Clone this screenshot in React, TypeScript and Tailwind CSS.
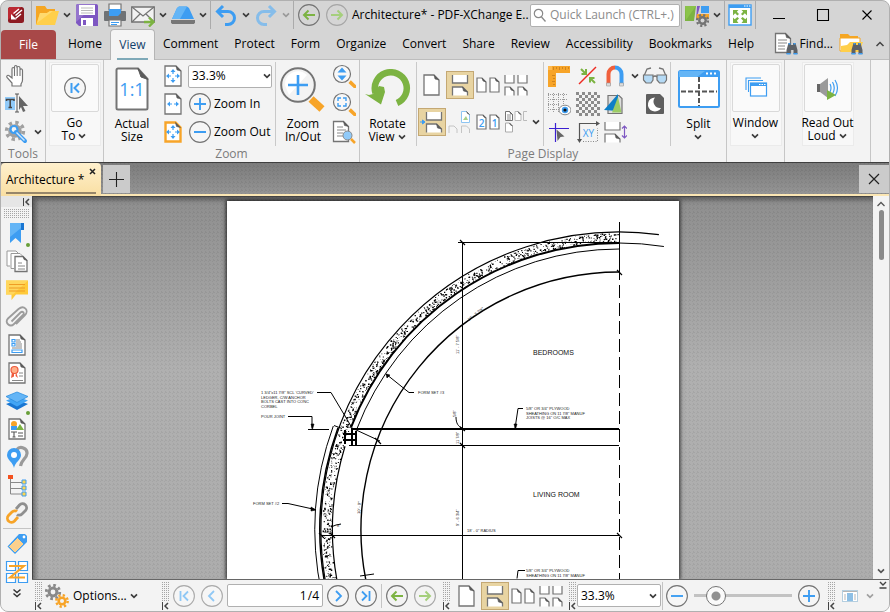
import React, { useState } from "react";

const blue = "#3d9df2";
const grey = "#747474";
const dark = "#5a5a5a";
const orange = "#f7a428";
const green = "#7cb342";

const weave =
  "bg-[linear-gradient(45deg,rgba(0,0,0,0.06)_25%,transparent_25%,transparent_75%,rgba(0,0,0,0.06)_75%),linear-gradient(#8e8e8e,#b0b0b0_45%,#adadad)] bg-[length:4px_4px,100%_100%]";
const darkWeave =
  "bg-[linear-gradient(45deg,rgba(0,0,0,0.06)_25%,transparent_25%,transparent_75%,rgba(0,0,0,0.06)_75%),linear-gradient(#7c7c7c,#969696)] bg-[length:4px_4px,100%_100%]";

type Kids = { children?: React.ReactNode };

function Svg({ w = 24, h = 24, children }: Kids & { w?: number; h?: number }) {
  return (
    <svg width={w} height={h} viewBox={`0 0 ${w} ${h}`} fill="none" className="block shrink-0" aria-hidden="true">
      {children}
    </svg>
  );
}

function Btn({ label, className = "", children }: Kids & { label: string; className?: string }) {
  return (
    <button type="button" aria-label={label} className={`flex shrink-0 items-center justify-center ${className}`}>
      {children}
    </button>
  );
}

function Chevron({ color = "#3c3c3c" }: { color?: string }) {
  return (
    <Svg w={10} h={8}>
      <path d="M2 2.300L5 5.300L8 2.300" stroke={color} strokeWidth="1.700" />
    </Svg>
  );
}

// Sheet of paper with a folded top right corner
function Sheet({ x = 0, y = 0, w, h, f = 5, stroke = grey, sw = 1.3, fill = "#fff" }: {
  x?: number; y?: number; w: number; h: number; f?: number; stroke?: string; sw?: number; fill?: string;
}) {
  return (
    <g>
      <path d={`M${x} ${y}h${w - f}l${f} ${f}v${h - f}h${-w}z`} fill={fill} stroke={stroke} strokeWidth={sw} />
      <path d={`M${x + w - f} ${y}l1 ${f - 1}l${f - 1} 1z`} fill={dark} stroke={dark} strokeWidth="0.6" />
    </g>
  );
}

function Round({ color = grey, children }: Kids & { color?: string }) {
  return (
    <Svg>
      <circle cx="12" cy="12" r="10.4" fill="#f6f6f6" stroke={color} strokeWidth="1.1" />
      {children}
    </Svg>
  );
}

function Plus() {
  return <Round><path d="M12 6v12M6 12h12" stroke={blue} strokeWidth="1.9" /></Round>;
}
function Minus() {
  return <Round><path d="M6 12h12" stroke={blue} strokeWidth="1.9" /></Round>;
}

function ArrowLeft({ faded = false, flip = false }: { faded?: boolean; flip?: boolean }) {
  return (
    <Svg>
      <circle cx="12" cy="12" r="10.4" stroke={faded ? "#a6a6a6" : grey} strokeWidth="1.1" />
      <path
        d={flip ? "M6 12h11M12.5 7.5L17 12l-4.5 4.5" : "M18 12H7M11.5 7.5L7 12l4.5 4.5"}
        stroke={faded ? "#a5cf7c" : green}
        strokeWidth="2"
      />
    </Svg>
  );
}

function Binoculars({ x, y }: { x: number; y: number }) {
  return (
    <g transform={`translate(${x} ${y})`}>
      <path d="M2.5 0h2.5v2h2V0h2.500l2 7v4H7.500V7h-3v4H.5V7z" fill="#5d6166" />
      <path d="M2.500 0h2v1.500h-2zM7.500 0h2v1.500h-2zM.5 10h4v1.500h-4zM7.500 10h4v1.500h-4z" fill={blue} />
    </g>
  );
}

function Gear({ x, y, r, color, hole }: { x: number; y: number; r: number; color: string; hole: string }) {
  return (
    <g>
      <circle cx={x} cy={y} r={r * 0.84} stroke={color} strokeWidth={r * 0.36} strokeDasharray={`${r * 0.33} ${r * 0.33}`} />
      <circle cx={x} cy={y} r={r * 0.68} fill={color} />
      <circle cx={x} cy={y} r={r * 0.3} fill={hole} />
    </g>
  );
}

// Four small arrows pointing outwards
function FourArrows({ cx, cy }: { cx: number; cy: number }) {
  return (
    <g transform={`translate(${cx} ${cy})`} fill={blue}>
      <path d="M0-7l2.500 3h-5zM0 7l2.500-3h-5zM-7 0l3-2.500v5zM7 0l-3-2.500v5z" />
      <path d="M0-4v2M0 4V2M-4 0h2M4 0H2" stroke={blue} strokeWidth="1.2" />
    </g>
  );
}

function Continuous() {
  return (
    <g>
      <path d="M6.500 4v8h15V4" fill="#fff" stroke={grey} strokeWidth="1.300" />
      <path d="M6.500 24.500v-8.500h10l5 5v3.500" fill="#fff" stroke={grey} strokeWidth="1.300" />
      <path d="M16.500 16l1 4l4 1z" fill={dark} stroke={dark} strokeWidth=".6" />
    </g>
  );
}

function PageSingle() {
  return <Svg><Sheet x={4} y={2} w={15} h={20} /></Svg>;
}
function PageContinuous() {
  return <Svg w={28} h={28}><Continuous /></Svg>;
}
function PageTwo() {
  return <Svg><Sheet x={1} y={5} w={9} h={14} f={4} sw={1.2} /><Sheet x={14} y={5} w={9} h={14} f={4} sw={1.2} /></Svg>;
}
function PageFour() {
  return (
    <Svg>
      {[1, 14].map((x) => (
        <g key={x}>
          <path d={`M${x} 2v8h9V2`} fill="#fff" stroke={grey} strokeWidth="1.200" />
          <path d={`M${x} 22.500v-8.500h5l4 4v4.500`} fill="#fff" stroke={grey} strokeWidth="1.200" />
          <path d={`M${x + 5} 14l1 3l3 1z`} fill={dark} stroke={dark} strokeWidth=".6" />
        </g>
      ))}
    </Svg>
  );
}

function Handle({ x, y, r, s }: { x: number; y: number; r: number; s: number }) {
  return (
    <g>
      <circle cx={x} cy={y} r={r} fill="#f7f7f7" stroke={grey} strokeWidth={s} />
      <path d={`M${x + r * 0.9} ${y + r * 0.9}l${r * 0.75} ${r * 0.7}`} stroke={orange} strokeWidth={r * 0.42} />
    </g>
  );
}

function Sep() {
  return <span className="mx-px w-px shrink-0 self-stretch bg-[#ababab]" />;
}
function ShortSep() {
  return <span className="mt-0.5 h-[84px] w-px shrink-0 bg-[#c9c9c9]" />;
}

function TitleBar() {
  return (
    <header className="flex h-7 items-center">
      <Btn label="PDF-XChange" className="w-[29px]">
        <Svg w={18} h={18}>
          <rect x="1" y="1" width="16" height="16" rx="2.500" fill="#8d1b22" />
          <path d="M1 3.500A2.500 2.500 0 013.500 1h11L1 14z" fill="#bb2a33" />
          <path d="M15 4L8.500 9.500M14 8L8.500 12.500M12 3L6.500 7.500" stroke="#fff" strokeWidth="1.500" />
          <path d="M4 8l5.500 5.500H4z" fill="#fff" />
        </Svg>
      </Btn>
      <Sep />
      <Btn label="Open" className="w-7">
        <Svg>
          <path d="M1 3h9l2 3h8v15H1z" fill="#f5a623" />
          <path d="M5 10h7l3-2h9l-4 14H1z" fill="#ffcf4a" />
          <path d="M5 10h7l3-2h3L2 20z" fill="#ffda6e" />
        </Svg>
      </Btn>
      <Btn label="Open menu" className="w-3"><Chevron /></Btn>
      <Btn label="Save" className="w-7">
        <Svg>
          <path d="M1 3a2 2 0 012-2h18a2 2 0 012 2v20H4l-3-3z" fill="#7e57c2" />
          <path d="M1 3a2 2 0 012-2h18L1 19z" fill="#9575cd" />
          <rect x="4" y="2" width="16" height="10" fill="#fff" />
          <path d="M6 5h12M6 7.500h12M6 10h12" stroke="#bbb" />
          <rect x="6" y="15" width="12" height="8" fill="#fff" />
          <rect x="8" y="17" width="3" height="5" fill="#7e57c2" />
        </Svg>
      </Btn>
      <Btn label="Print" className="w-7">
        <Svg>
          <path d="M6 1h12v6H6z" fill="#fff" stroke={grey} strokeWidth="1.200" />
          <rect x="1" y="8" width="22" height="10" rx="1" fill="#6f7275" />
          <path d="M6 6h12v4l-3 3H6z" fill={blue} />
          <path d="M6 17h12v6H6z" fill="#fff" stroke={grey} strokeWidth="1.200" />
          <path d="M8 19.500h8M8 21.500h6" stroke={blue} />
        </Svg>
      </Btn>
      <Btn label="Email" className="w-7">
        <Svg>
          <path d="M.7 4h22.600v15H.7z" fill="#f2f2f2" stroke={grey} strokeWidth="1.300" />
          <path d="M1 4l11 9L23 4M1 19l8-8M23 19l-8-8" stroke={grey} strokeWidth="1.200" />
          <path d="M13 19h8M18 14.500l4.500 4.500l-4.500 4.500" stroke={green} strokeWidth="2.400" />
        </Svg>
      </Btn>
      <Btn label="Email menu" className="w-3"><Chevron /></Btn>
      <Btn label="Scan" className="w-7">
        <Svg>
          <path d="M6 5l2-1.500h8L18 5l5 11H1z" fill={blue} />
          <path d="M6 5l2-1.500h8L9 16H1z" fill="#64b5f6" />
          <path d="M0 17h24v2.500l-1 1.500H1l-1-1.500z" fill="#777" />
        </Svg>
      </Btn>
      <Btn label="Scan menu" className="w-3"><Chevron /></Btn>
      <Sep />
      <Btn label="Undo" className="w-7">
        <Svg><path d="M9 3L3.500 8.500L9 14M4 8.500h10a6 6 0 010 13h-3" stroke={blue} strokeWidth="3" /></Svg>
      </Btn>
      <Btn label="Undo menu" className="w-3"><Chevron /></Btn>
      <Btn label="Redo" className="w-7">
        <Svg><path d="M15 3l5.500 5.500L15 14M20 8.500H10a6 6 0 000 13h3" stroke="#86bdea" strokeWidth="3" /></Svg>
      </Btn>
      <Btn label="Redo menu" className="w-3"><Chevron color="#9a9a9a" /></Btn>
      <Sep />
      <Btn label="Back" className="w-7"><ArrowLeft /></Btn>
      <Btn label="Forward" className="w-7"><ArrowLeft faded flip /></Btn>
      <h1 className="min-w-0 flex-1 overflow-hidden pl-px whitespace-nowrap">Architecture* - PDF-XChange E..</h1>
      <label className="flex h-[23px] w-[150px] shrink-0 items-center gap-1 rounded-xs border border-[#b0b0b0] bg-white pl-0.5">
        <Svg w={13} h={14}>
          <circle cx="5.500" cy="5.500" r="4.200" stroke="#888" strokeWidth="1.200" />
          <path d="M8.500 9l4 4.500" stroke="#888" strokeWidth="1.300" />
        </Svg>
        <input aria-label="Quick Launch" placeholder="Quick Launch (CTRL+.)" className="w-full min-w-0 outline-none placeholder:text-[#8c8c8c]" />
      </label>
      <Sep />
      <Btn label="UI options" className="w-7">
        <Svg>
          <path d="M0 3h11l-2 15H0z" fill={green} />
          <path d="M0 3h11L1 17z" fill="#8bc34a" />
          <path d="M12 3h3l-4 15z" fill="#7e57c2" />
          <path d="M16 3h8v7h-8z" fill={blue} />
          <path d="M12 11h12v5H11z" fill={orange} />
          <Gear x={17.500} y={17.500} r={6.500} color="#737373" hole="#d5d5d5" />
        </Svg>
      </Btn>
      <Btn label="UI options menu" className="w-3"><Chevron /></Btn>
      <Sep />
      <Btn label="Full screen" className="w-7">
        <Svg>
          <rect x="1" y="2" width="22" height="20" fill="#fff" stroke={blue} strokeWidth="1.400" />
          <rect x="1" y="2" width="22" height="3" fill={blue} />
          <path d="M16 3h1.500M18.500 3H20M21 3h1.500" stroke="#fff" />
          <path d="M5 7h5.500L8.800 8.700l2.200 2.200l-1.600 1.600l-2.200-2.200L5 12.500zM19 7h-5.500l1.700 1.700l-2.200 2.200l1.600 1.600l2.200-2.200l2.200 2.200zM5 20v-5.500l1.700 1.700l2.700-2.200l1.600 1.600l-2.200 2.200l1.700 2.200zM19 20v-5.500l-1.700 1.700l-2.700-2.200l-1.600 1.600l2.200 2.200l-1.700 2.200z" fill={green} />
        </Svg>
      </Btn>
      <Sep />
      <Btn label="Minimize" className="w-11"><Svg w={14} h={14}><path d="M1 10.500h12" stroke="#000" strokeWidth="1.100" /></Svg></Btn>
      <Btn label="Maximize" className="w-11"><Svg w={14} h={14}><path d="M1.500 1.500h11v11h-11z" stroke="#000" strokeWidth="1.100" /></Svg></Btn>
      <Btn label="Close" className="w-11"><Svg w={12} h={12}><path d="M1.500 1.500l9 9M10.500 1.500l-9 9" stroke="#000" strokeWidth="1.100" /></Svg></Btn>
    </header>
  );
}

const menus = ["Comment", "Protect", "Form", "Organize", "Convert", "Share", "Review", "Accessibility", "Bookmarks", "Help"];

function MenuBar() {
  return (
    <nav className="flex h-[31px] items-stretch border-b border-[#bdbdbd]">
      <button type="button" className="mt-px w-[55px] shrink-0 rounded-t-sm bg-[#a84848] text-white">File</button>
      <button type="button" className="ml-1 px-2">Home</button>
      <button type="button" className="relative -mb-px flex w-[45px] shrink-0 items-center justify-center rounded-t-sm border border-b-0 border-[#b5b5b5] bg-[#f4f4f4] text-[#123f6b]">
        View
        <span className="absolute inset-x-1.5 bottom-0 h-0.5 bg-[#7ea9b8]" />
      </button>
      {menus.map((m) => (
        <button type="button" key={m} className="px-2">{m}</button>
      ))}
      <div className="ml-auto flex shrink-0 items-center">
        <button type="button" className="flex items-center gap-0.5">
          <Svg>
            <Sheet x={1.500} y={1.500} w={15} h={19} f={5} />
            <path d="M4 8h9M4 11h9M4 14h7M4 17h7" stroke="#888" />
            <Binoculars x={12} y={11} />
          </Svg>
          Find...
        </button>
        <Btn label="Search" className="ml-1.5">
          <Svg>
            <path d="M1 2h8l2 2h8v4H1z" fill="#f5a623" />
            <path d="M1 6h20v13H1z" fill="#fff" stroke="#f5a623" />
            <path d="M2 14l6-1l3-3h13l-4 10H2z" fill="#ffcf4a" />
            <Binoculars x={12} y={11} />
          </Svg>
        </Btn>
        <Btn label="Collapse ribbon" className="w-[26px] pl-2">
          <Svg w={10} h={8}><path d="M1.500 6L5 2.500L8.500 6" stroke="#444" strokeWidth="1.500" /></Svg>
        </Btn>
      </div>
    </nav>
  );
}

function Group({ label, className = "", children }: Kids & { label?: string; className?: string }) {
  return (
    <section className={`flex shrink-0 flex-col border-r border-[#c6c6c6] ${className}`}>
      <div className="flex h-[86px] justify-center">{children}</div>
      {label && <h2 className="text-center leading-4 text-[#7b7b7b]">{label}</h2>}
    </section>
  );
}

function Caption({ a, b, arrow }: { a: string; b?: string; arrow?: boolean }) {
  return (
    <span className="block text-center leading-[13px] whitespace-nowrap">
      <span className="block">{a}</span>
      <span className="flex h-[13px] items-center justify-center gap-0.5">{b}{arrow && <Chevron />}</span>
    </span>
  );
}

function Framed({ a, b, children }: Kids & { a: string; b?: string }) {
  return (
    <button type="button" className="mt-0.5 flex h-[84px] w-[52px] flex-col items-center border border-[#ebebeb] bg-[#f8f8f8] pt-px">
      <span className="mb-1 flex h-12 w-12 shrink-0 items-center justify-center rounded-xs border border-[#d9d9d9] bg-[#fafafa]">{children}</span>
      <Caption a={a} b={b} arrow />
    </button>
  );
}

function BigButton({ a, b, arrow, className = "", children }: Kids & { a: string; b?: string; arrow?: boolean; className?: string }) {
  return (
    <button type="button" className={`flex shrink-0 flex-col items-center ${className}`}>
      <span className="flex h-[57px] items-center">{children}</span>
      <Caption a={a} b={b} arrow={arrow} />
    </button>
  );
}

function ZoomSelect({ id }: { id: string }) {
  return (
    <span className="relative flex items-center">
      <select id={id} aria-label="Zoom level" defaultValue="33.3%" className="h-[23px] w-[84px] appearance-none rounded-xs border border-[#b0b0b0] bg-white pl-[3px] outline-none">
        <option>33.3%</option>
        <option>50%</option>
        <option>100%</option>
      </select>
      <span className="pointer-events-none absolute right-[3px]"><Chevron /></span>
    </span>
  );
}

function Ribbon() {
  return (
    <div className="flex h-[102px] shrink-0 bg-[#f3f3f3]">
      <Group label="Tools" className="w-[45px]">
        <div className="grid w-full grid-cols-[28px_1fr] grid-rows-3 pt-0.5 pl-px">
          <Btn label="Hand">
            <Svg>
              <path d="M8 22v-3L3 13.500c-1-2 1-3 2.500-1.500L8 14V5c0-2 2.500-2 2.500 0V3c0-2 2.500-2 2.500 0v1c0-2 3-2 3 0v2c0-1.500 2.500-1.500 2.500.5V16c0 2-1 3-1.500 4v2z" fill="#fff" stroke={grey} strokeWidth="1.200" />
              <path d="M10.500 5v7M13.200 4v8M16 6v6" stroke={grey} strokeWidth="1.100" />
            </Svg>
          </Btn>
          <span />
          <Btn label="Select text">
            <Svg>
              <path d="M1 5h10v13H1z" fill="#90caf9" />
              <path d="M2.500 9V7.500h7.500V9M6.200 7.500v8M4.500 15.500h3.500" stroke="#444" strokeWidth="1.500" />
              <path d="M11 2h4M13 2v18M11 20h4" stroke="#555" />
              <path d="M15 4l9 10h-5l2.500 5l-2.500 1l-2-5l-2 3z" fill="#666" />
            </Svg>
          </Btn>
          <span />
          <Btn label="Tools">
            <Svg>
              <Gear x={11} y={11} r={10} color="#a0a0a0" hole="#f3f3f3" />
              <circle cx="10" cy="9.500" r="3.500" fill="#f3f3f3" stroke={blue} strokeWidth="2.200" />
              <path d="M12 12l9 9" stroke={blue} strokeWidth="4" strokeLinecap="round" />
              <path d="M12.500 12.500l8 8" stroke="#cfe6fb" strokeWidth="1.500" />
            </Svg>
          </Btn>
          <Btn label="Tools menu"><Chevron /></Btn>
        </div>
      </Group>

      <Group className="w-[58px]">
        <Framed a="Go" b="To">
          <Round>
            <path d="M8.500 7v10" stroke={blue} strokeWidth="2" />
            <path d="M16 7.500L11.500 12l4.500 4.500" stroke={blue} strokeWidth="2" />
          </Round>
        </Framed>
      </Group>

      <Group label="Zoom" className="w-[256px]">
        <BigButton a="Actual" b="Size" className="w-[54px]">
          <Svg w={34} h={44}>
            <path d="M1.500 3a1.500 1.500 0 011.500-1.500h20L32.500 12v29a1.500 1.500 0 01-1.500 1.500H3A1.500 1.500 0 011.500 41z" fill="#fff" stroke={grey} strokeWidth="2" />
            <path d="M23 1.500L26 10l7 2.500z" fill={dark} stroke={dark} />
            <text x="17" y="29" textAnchor="middle" fontSize="18" fontWeight="400" fontFamily="Open Sans, sans-serif" fill={blue}>1:1</text>
          </Svg>
        </BigButton>
        <div className="grid w-7 shrink-0 grid-rows-3 pt-0.5">
          <Btn label="Fit page"><Svg w={18} h={22}><Sheet x={1} y={1} w={16} h={20} /><FourArrows cx={9} cy={11} /></Svg></Btn>
          <Btn label="Fit width">
            <Svg w={18} h={22}>
              <Sheet x={1} y={1} w={16} h={20} />
              <path d="M3 11l3-2.500v5zM15 11l-3-2.500v5z" fill={blue} />
              <path d="M5 11h3M10 11h3" stroke={blue} />
            </Svg>
          </Btn>
          <Btn label="Fit visible"><Svg w={18} h={22}><Sheet x={1.500} y={1.500} w={15} h={19} stroke={orange} sw={2.400} /><FourArrows cx={9} cy={11} /></Svg></Btn>
        </div>
        <div className="grid w-[88px] shrink-0 grid-rows-3 pt-0.5 pl-px">
          <ZoomSelect id="ribbon-zoom" />
          <button type="button" className="flex items-center gap-0.5"><Plus />Zoom In</button>
          <button type="button" className="flex items-center gap-0.5 whitespace-nowrap"><Minus />Zoom Out</button>
        </div>
        <ShortSep />
        <BigButton a="Zoom" b="In/Out" className="w-[54px]">
          <Svg w={46} h={48}>
            <circle cx="18" cy="20" r="16.800" fill="#f3f3f3" stroke={grey} strokeWidth="2" />
            <path d="M5 20A13 13 0 0127 10L9 30z" fill="#fff" />
            <path d="M18 10v20M8 20h20" stroke={blue} strokeWidth="2.600" />
            <path d="M31 34l11 10" stroke={orange} strokeWidth="7.500" />
          </Svg>
        </BigButton>
        <div className="grid w-7 shrink-0 grid-rows-3 pt-0.5">
          <Btn label="Dynamic zoom"><Svg><Handle x={10} y={10} r={8.500} s={1.200} /><path d="M10 3.500l4.500 5h-9zM10 16.500l4.500-5h-9z" fill={blue} /></Svg></Btn>
          <Btn label="Marquee zoom">
            <Svg>
              <Handle x={10} y={10} r={8.500} s={1.200} />
              <path d="M6 9V6h3M11 6h3v3M14 11v3h-3M9 14H6v-3" stroke={blue} strokeWidth="1.400" />
            </Svg>
          </Btn>
          <Btn label="Loupe">
            <Svg>
              <Sheet x={1.500} y={1.500} w={15} h={20} />
              <path d="M5 7h6M5 10h9M5 13h6M5 16h6" stroke="#888" />
              <circle cx="15.500" cy="15.500" r="4.500" fill="#90caf9" stroke="#888" />
              <path d="M19 19l4 4" stroke={orange} strokeWidth="2.500" />
            </Svg>
          </Btn>
        </div>
      </Group>

      <Group label="Page Display" className="w-[367px]">
        <BigButton a="Rotate" b="View" arrow className="w-14">
          <Svg w={46} h={40}>
            <path d="M32 34A16 16 0 1010.500 24" stroke={green} strokeWidth="6.500" />
            <path d="M0 25l4 1l4-1l6-8l5 1l1 5l-4 12.500z" fill={green} />
          </Svg>
        </BigButton>
        <ShortSep />
        <div className="flex w-[126px] shrink-0 flex-col gap-[9px] pt-[11px] pl-px">
          <div className="flex h-7 items-center">
            <Btn label="Single page" className="w-7"><PageSingle /></Btn>
            <Btn label="Continuous" className="h-7 w-7 border border-[#c4a873] bg-[#e8d4a2]"><PageContinuous /></Btn>
            <Btn label="Two pages" className="w-7"><PageTwo /></Btn>
            <Btn label="Two pages continuous" className="w-7"><PageFour /></Btn>
          </div>
          <div className="flex h-7 items-center">
            <Btn label="Show gaps" className="h-7 w-7 border border-[#c4a873] bg-[#e8d4a2]">
              <Svg w={28} h={28}>
                <g transform="translate(2 0)"><Continuous /></g>
                <path d="M2 14h3M4.500 12l2.500 2l-2.500 2z" fill={blue} stroke={blue} />
              </Svg>
            </Btn>
            <Btn label="Cover page" className="w-7">
              <Svg>
                <Sheet x={13.500} y={1.500} w={8} h={11} f={3} stroke="#8ec5f2" sw={1} />
                <path d="M15 10l3-4l2 4z" fill="#a8d08a" />
                <path d="M1 23v-7h5l3 3v4M13.500 23v-7h5l3 3v4" stroke="#c4c4c4" />
              </Svg>
            </Btn>
            <Btn label="Right to left" className="w-7">
              <Svg>
                <Sheet x={1} y={5} w={9} h={14} f={3} sw={1.200} />
                <Sheet x={14} y={5} w={9} h={14} f={3} sw={1.200} />
                <text x="5.500" y="17" textAnchor="middle" fontSize="10" fontWeight="600" fontFamily="Open Sans, sans-serif" fill={blue}>2</text>
                <text x="18.500" y="17" textAnchor="middle" fontSize="10" fontWeight="600" fontFamily="Open Sans, sans-serif" fill={blue}>1</text>
              </Svg>
            </Btn>
            <Btn label="Split spreads" className="w-7">
              <Svg>
                <Sheet x={1.500} y={1.500} w={7} h={9} f={3} sw={1} />
                <path d="M3 5h4M3 7h4M3 9h4" stroke={grey} strokeWidth=".8" />
                <Sheet x={11} y={1.500} w={6} h={9} f={3} stroke="#bbb" sw={1} />
                <path d="M23 1.500h-3.500v9H23" stroke="#bbb" />
                <Sheet x={1.500} y={13} w={7} h={9} f={3} stroke="#aaa" sw={1} />
              </Svg>
            </Btn>
            <Btn label="Page layout menu" className="w-3"><Chevron /></Btn>
          </div>
        </div>
        <ShortSep />
        <div className="grid w-[126px] shrink-0 grid-cols-[30px_28px_27px_12px_28px] grid-rows-3 pt-0.5">
          <Btn label="Rulers">
            <Svg>
              <path d="M1 2h22v7H9v14H1z" fill={orange} />
              <path d="M6.500 3v3M9.500 3v2M12.500 3v3M15.500 3v2M18.500 3v3M21.500 3v2M5 11.500h3M6 14.500h2M5 17.500h3M6 20.500h2" stroke="#c47d1c" strokeWidth=".8" />
              <path d="M1 2h4v4H1z" fill="#ffb94d" />
            </Svg>
          </Btn>
          <Btn label="Line weights">
            <Svg>
              <path d="M3 20L20 3" stroke="#ee2b22" strokeWidth="1.500" />
              <path d="M5 5l5 5M5.500 10h4.500V5M19 19l-5-5M14 18.500V14h4.500" stroke={green} strokeWidth="2" />
            </Svg>
          </Btn>
          <Btn label="Snap">
            <Svg>
              <path d="M5.500 21V10a6.500 6.500 0 016.500-6.500" stroke="#f0603c" strokeWidth="4" />
              <path d="M18.500 21V10A6.500 6.500 0 0012 3.500" stroke={blue} strokeWidth="4" />
              <path d="M3.500 19h4v3h-4zM16.500 19h4v3h-4z" fill="#ddd" stroke="#999" strokeWidth=".6" />
            </Svg>
          </Btn>
          <Btn label="Snap menu"><Chevron /></Btn>
          <Btn label="Proof view">
            <Svg w={26} h={20}>
              <path d="M2 10L5 3l4-1M24 10l-3-7l-4-1" stroke={grey} strokeWidth="1.300" />
              <path d="M1.500 9h9.500v5l-2 3H4l-2.500-3zM15 9h9.500v5l-2 3h-5L15 14z" fill="#b5daf5" stroke={grey} strokeWidth="1.200" />
              <path d="M11 11q2-2 4 0" stroke={grey} strokeWidth="1.200" />
            </Svg>
          </Btn>
          <Btn label="Grid">
            <Svg>
              <path d="M1.500 1v20M6.500 1v20M11.500 1v20M16.500 1v12M1 2.500h20M1 7.500h20M1 12.500h12M1 17.500h10" stroke="#999" strokeDasharray="1 1" />
              <ellipse cx="18" cy="18" rx="6" ry="4.800" fill="#fff" stroke="#888" />
              <circle cx="18" cy="18" r="3.200" fill={blue} />
              <circle cx="18" cy="18" r="1.600" fill="#111" />
            </Svg>
          </Btn>
          <Btn label="Transparency grid">
            <Svg>
              {Array.from({ length: 32 }, (_, i) => {
                const row = Math.floor(i / 4);
                return <rect key={i} x={(i % 4) * 6 + (row % 2) * 3} y={row * 3} width="3" height="3" fill="#8c8c8c" />;
              })}
            </Svg>
          </Btn>
          <Btn label="Compare colors">
            <Svg>
              <path d="M5 3.500h11l3 3v15H5z" fill="#ddd" stroke={grey} strokeWidth="1.200" />
              <path d="M1 18L15 2v17z" fill="#0d7fc7" />
              <path d="M15 5l3.500 15.500H9z" fill="#9ccc65" />
            </Svg>
          </Btn>
          <span />
          <Btn label="Dark mode">
            <Svg>
              <path d="M4 2h13l4 4v15a1 1 0 01-1 1H4a1 1 0 01-1-1V3a1 1 0 011-1z" fill="#5e5e5e" />
              <path d="M12 5.500a7 7 0 106 10.500a6.500 6.500 0 01-6-10.500z" fill="#fff" />
            </Svg>
          </Btn>
          <Btn label="Guides">
            <Svg>
              <path d="M2 8.500h20M8.500 3v19" stroke="#3b1fd1" strokeWidth="1.200" />
              <path d="M9.500 9.500l8 7l-4 .5l-3 4z" fill="#666" />
            </Svg>
          </Btn>
          <Btn label="Coordinates">
            <Svg>
              <path d="M3.500 21V3.500H21" stroke="#555" strokeWidth="1.200" />
              <path d="M20 1l4 2.500L20 6zM1 19h5l-2.500 4z" fill="#555" />
              <path d="M7 21.500h14.500V8" stroke="#888" strokeDasharray="1 1.500" />
              <text x="12.500" y="17" textAnchor="middle" fontSize="10" fontFamily="Open Sans, sans-serif" fill={blue}>XY</text>
            </Svg>
          </Btn>
          <Btn label="Page gap">
            <Svg>
              <path d="M2 2v8h15V2M2 22.500v-8.500h10l5 5v3.500" stroke={grey} strokeWidth="1.200" fill="#fff" />
              <path d="M12 14l1 4l4 1z" fill={dark} stroke={dark} strokeWidth=".6" />
              <path d="M21.500 6v12M19 8.500L21.500 6L24 8.500M19 15.500l2.500 2.500l2.500-2.500" stroke="#7e57c2" strokeWidth="1.200" />
            </Svg>
          </Btn>
        </div>
        <ShortSep />
        <BigButton a="Split" arrow className="w-14">
          <Svg w={42} h={40}>
            <rect x="1" y="2" width="40" height="36" rx="1.500" fill="#fff" stroke={blue} strokeWidth="2" />
            <path d="M1 2h40v6H1z" fill={blue} />
            <path d="M1 2h26l-8 6H1z" fill="#64b5f6" />
            <path d="M28 4.500h2M32 4.500h2M36 4.500h2" stroke="#fff" strokeWidth="2" />
            <path d="M21 8v29M3 22.500h36" stroke="#555" strokeWidth="2" strokeDasharray="5 2" />
          </Svg>
        </BigButton>
      </Group>

      <Group className="w-[58px]">
        <Framed a="Window">
          <Svg>
            <path d="M2 14V2h15M4.500 16V4.500H19" stroke={blue} strokeWidth="1.100" />
            <rect x="6.500" y="7" width="16" height="13" fill="#fff" stroke={blue} strokeWidth="1.200" />
            <path d="M6.500 7h16v3h-16z" fill={blue} />
            <path d="M15 8.500h1.500M17.500 8.500H19M20 8.500h1.500" stroke="#fff" />
          </Svg>
        </Framed>
      </Group>

      <Group className="w-[86px]">
        <Framed a="Read Out" b="Loud">
          <Svg>
            <path d="M1 8h3v8H1z" fill="#666" />
            <path d="M4 8l8-6v20l-8-6z" fill="#9a9a9a" />
            <path d="M14 8q2 4 0 8M16.500 6q3.500 6 0 12M19 4q5 8 0 16" stroke={blue} strokeWidth="1.200" />
            <path d="M11 14l9 5l-9 5z" fill={green} />
          </Svg>
        </Framed>
      </Group>
    </div>
  );
}

function DocumentTabs() {
  return (
    <div className={`flex h-[34px] shrink-0 items-stretch border-t border-[#3f3f3f] ${darkWeave}`}>
      <div className="relative flex w-[100px] items-center rounded-t-sm bg-linear-to-b from-[#fff0cd] to-[#f9dfa2] pl-[5px]">
        <a href="#architecture">Architecture *</a>
        <Btn label="Close tab" className="absolute top-1 right-1">
          <Svg w={9} h={9}><path d="M2 2l5 5M7 2l-5 5" stroke="#222" strokeWidth="1.500" /></Svg>
        </Btn>
        <span className="absolute inset-x-[5px] bottom-0.5 h-0.5 bg-[#97866a]" />
      </div>
      <div className="flex flex-1 items-start justify-between border-b-2 border-[#fbe6b3] pt-0.5">
        <Btn label="New tab" className="ml-0.5 h-7 w-[27px] bg-[#cbcbcb]">
          <Svg w={15} h={15}><path d="M7.500 0v15M0 7.500h15" stroke="#222" strokeWidth="1.100" /></Svg>
        </Btn>
        <Btn label="Close document" className="h-7 w-[30px] bg-[#cbcbcb]">
          <Svg w={12} h={12}><path d="M1 1l10 10M11 1L1 11" stroke="#222" strokeWidth="1.200" /></Svg>
        </Btn>
      </div>
    </div>
  );
}

const sideIcons: { name: string; dot?: boolean; art: React.ReactNode }[] = [
  {
    name: "Bookmarks", dot: true,
    art: <><path d="M5 2h14v7h-3v13l-5.500-5L5 22z" fill={blue} /><path d="M5 2h11v5L5 16z" fill="#64b5f6" /><path d="M16 2h3v7h-3z" fill="#1976d2" /></>,
  },
  {
    name: "Thumbnails",
    art: <><path d="M5 17H2V2h9l3 3M9 19.500H6V4.500h9l3 3" fill="#fff" stroke="#999" /><Sheet x={10} y={7.500} w={12} h={15} f={4} /><path d="M13 14h4M13 17h7M13 20h7" stroke="#888" /></>,
  },
  {
    name: "Comments",
    art: <><path d="M1 3.500h22v14H11L6.500 23v-5.500H1z" fill="#ffca3a" /><path d="M1 3.500h22L8 17.500H1z" fill="#ffd75e" /><path d="M4 7.500h16M4 11h16M4 14h16" stroke="#ef9c24" strokeWidth="1.200" /></>,
  },
  {
    name: "Attachments",
    art: <path d="M6.500 16.500l9-9c2-2 4.500.5 2.500 2.500L9 19c-4 4-10-1.500-6-5.500L13.500 4c5.500-4.500 11 1.500 6.500 6l-9 9" stroke="#9c9c9c" strokeWidth="1.800" />,
  },
  {
    name: "Fields",
    art: <><Sheet x={4} y={2} w={16} h={20} /><path d="M7 6.500h3v2.500H7zM7 10.500h3V13H7zM7 17h10v2.500H7z" stroke={blue} strokeWidth="1.200" /><path d="M11 7h4M11 9h5M11 11h6M11 13h6M7 15h10" stroke="#888" /></>,
  },
  {
    name: "Signatures",
    art: <><Sheet x={4} y={2} w={16} h={20} /><path d="M7 11l-1 6l3-1.500V11M11 11l2 6l-2.500-2z" fill="#ee5a3c" /><circle cx="9.500" cy="9" r="3.500" fill="#ffb08a" stroke="#ee5a3c" strokeWidth="1.200" /><path d="M14 12h4M14 15h4M7 19.500h11" stroke="#888" /></>,
  },
  {
    name: "Layers", dot: true,
    art: <><path d="M1 15l11-4l11 4l-11 6z" fill="#1976d2" /><path d="M1 11.500l11-4l11 4l-11 6z" fill="#42a5f5" /><path d="M1 7.500L12 3l11 4.500l-11 6z" fill="#64b5f6" stroke="#2f8fe0" strokeWidth=".8" /></>,
  },
  {
    name: "Content",
    art: <><Sheet x={4} y={2} w={16} h={20} /><circle cx="9" cy="7" r="3" fill={orange} /><path d="M6 9h6v4H6z" fill={blue} /><path d="M15 7l4 6h-8z" fill={green} /><path d="M6 15h6M9 15v5M7.500 20h3M13 16h5M13 19h5" stroke="#555" strokeWidth="1.100" /></>,
  },
  {
    name: "Destinations",
    art: <><path d="M12 4.500c3-4 10.500-1.500 10 4c-.3 5-5.500 6-6.500 12.500" stroke="#9a9a9a" strokeWidth="3.200" /><path d="M9 23C8 17 2 15 2 10a7 7 0 0114 0c0 5-6 7-7 13z" fill={blue} /><circle cx="9" cy="10" r="3" fill="#fff" /></>,
  },
  {
    name: "Model Tree",
    art: <><path d="M5.500 6v15H17M6 15.500h11M6 9.500h11" stroke="#888" /><path d="M3 2h5v4H3z" fill="#f4511e" /><path d="M17 7h4v4h-4zM17 13h4v4h-4zM17 19h4v4h-4z" fill="#ffd54f" stroke={blue} /></>,
  },
  {
    name: "Links",
    art: <><path d="M11 8l3.500-4a4 4 0 016 5.500L17 13c-1.500 1.500-4 1.500-5 .5" stroke="#8f8f8f" strokeWidth="2.800" /><path d="M13 16l-3.500 4a4 4 0 01-6-5.500L7 11c1.500-1.500 4-1.500 5-.5" stroke={orange} strokeWidth="2.800" /></>,
  },
];

const tailIcons: { name: string; art: React.ReactNode }[] = [
  {
    name: "Named items",
    art: <><path d="M14 2h6l2 2v6L10 22l-7.500-7.500z" fill={blue} /><path d="M12.500 5.500l6.500 6.500L10 21l-6.500-6.500z" fill="#fbd08c" stroke={blue} /><circle cx="19" cy="5" r="1.400" fill="#fff" /></>,
  },
  {
    name: "Order",
    art: <><path d="M1.500 1.500h9v9h-9zM13.500 1.500h9v9h-9zM1.500 13.500h9v9h-9zM13.500 13.500h9v9h-9z" fill="#fff" stroke={blue} strokeWidth="1.200" /><path d="M4 6h15L5 17.500h15" stroke={orange} strokeWidth="2" /></>,
  },
];

function Grip() {
  return (
    <Svg w={9} h={20}>
      {[1.500, 3.500, 5.500, 7.500].map((x) => (
        <path key={x} d={`M${x} 0v20`} stroke="#a5a5a5" strokeDasharray="1 1" />
      ))}
    </Svg>
  );
}
function Dock() {
  return <Svg w={8} h={8}><path d="M1.500 0v8" stroke="#444" /><path d="M7 1L4 4l3 3" stroke="#444" strokeWidth="1.500" /></Svg>;
}

function SidePanel() {
  return (
    <aside className="flex w-[31px] shrink-0 flex-col items-center bg-[#f3f3f3]">
      <div className="flex h-[11px] w-full items-center justify-end bg-[#e6e6e6] pr-0.5"><Dock /></div>
      <Svg w={26} h={12}>
        {[2, 4, 6, 8, 10].map((y) => (
          <path key={y} d={`M0 ${y}.5h26`} stroke="#a5a5a5" strokeDasharray="1 1" />
        ))}
      </Svg>
      {sideIcons.map((s) => (
        <Btn key={s.name} label={s.name} className="relative h-7 w-full">
          <Svg>{s.art}</Svg>
          {s.dot && <span className="absolute right-0.5 bottom-0 h-1 w-1 rounded-full bg-[#689f38]" />}
        </Btn>
      ))}
      <span className="my-px h-px w-7 shrink-0 bg-[#c4c4c4]" />
      {tailIcons.map((s) => (
        <Btn key={s.name} label={s.name} className="h-7 w-full"><Svg>{s.art}</Svg></Btn>
      ))}
      <Btn label="More panes" className="mt-0.5">
        <Svg w={10} h={10}><path d="M1.500 1.500l3.500 3l3.500-3M1.500 5.500l3.500 3l3.500-3" stroke="#333" strokeWidth="1.500" /></Svg>
      </Btn>
    </aside>
  );
}

// Dome section: everything is drawn round one centre
const CX = 392;
const CY = 329;

function arc(r: number, a0: number, a1: number) {
  const rad = Math.PI / 180;
  const p = (a: number) => `${(CX + r * Math.cos(a * rad)).toFixed(1)} ${(CY - r * Math.sin(a * rad)).toFixed(1)}`;
  return `M${p(a0)}A${r} ${r} 0 0 0 ${p(a1)}`;
}

function stipple() {
  let seed = 11;
  const rnd = () => {
    seed = (seed * 16807) % 2147483647;
    return seed / 2147483647;
  };
  let d = "";
  for (let i = 0; i < 1050; i++) {
    const a = ((90 + rnd() * 102) * Math.PI) / 180;
    const r = 288 + rnd() * 9;
    const s = (0.4 + rnd() * 1.2).toFixed(1);
    d += `M${(CX + r * Math.cos(a)).toFixed(1)} ${(CY - r * Math.sin(a)).toFixed(1)}h${s}v${s}h-${s}z`;
  }
  return d;
}
const dots = stipple();

function Note({ x, y, lines }: { x: number; y: number; lines: string[] }) {
  return (
    <text fontSize="4" fill="#222">
      {lines.map((l, i) => (
        <tspan key={l} x={x} y={y + i * 4.7}>{l}</tspan>
      ))}
    </text>
  );
}

function Drawing() {
  return (
    <svg viewBox="0 0 452 378" className="block h-full w-full" fill="none" stroke="#000" fontFamily="Liberation Sans, sans-serif">
      <path d={dots} fill="#000" stroke="none" />
      <path d={arc(298, 82.3, 192)} strokeWidth="1.200" />
      <path d={arc(287, 81, 90)} />
      <path d={arc(287, 90, 159)} strokeWidth="2" />
      <path d={arc(286.500, 163, 192)} strokeWidth="1.200" />
      <path d={arc(281, 90, 159)} />
      <path d={arc(258, 90, 192)} strokeWidth="1.400" />
      <path d={arc(304, 160, 192)} />
      <path d={arc(299, 160, 192)} strokeWidth="1.500" />
      <path d="M107 224.500l8 3" />

      {/* dimension and centre lines */}
      <path d="M392.500 21v58" />
      <path d="M392.500 84v294" strokeDasharray="13 5" />
      <path d="M231 41.500h161M235.500 41v337M94 334.500h298" />
      <path d="M124 228h268" strokeWidth="2" />
      <path d="M122 244.500h270" />
      <path d="M233 39l5 5M390 69l5 5M233 226l5 4M233 242l5 5M92 332l5 5M390 332l5 5M103 332l5 5M148 237l6 6" strokeWidth="1.200" />
      <path d="M127 228l26 12M104 191.500l22 37M90 191.500h14M61 215.500h24v12M81 228.500h21" />
      <path d="M187 191.500h-5L159 173M296 207.500h-5l-3 20M298 369.500h-7l-1 8" />
      <path d="M55 302.500h6l27 6M229 216c0 6 2 10 7 11M133 375l14-2" />
      <path d="M104 326l5-2l5-1" />
      <path d="M159 173l4 1l-3 3zM287 223h3l-1.500 5zM84 223h3l-1.500 5zM84 306l5 3l-5 1z" fill="#000" strokeWidth=".6" />
      <path d="M118 229v14M125 228v17M129 230v14M116 233h12M116 239h12" strokeWidth="2" />

      <g fill="#111" stroke="none">
        <text x="306" y="154" fontSize="7">BEDROOMS</text>
        <text x="306" y="296" fontSize="7">LIVING ROOM</text>
        <Note x={34} y={193} lines={["1 3/4\"x11 7/8\" SCL 'CURVED'", "LEDGER, C/W ANCHOR", "BOLTS CAST INTO CONC", "CORBEL"]} />
        <Note x={34} y={217} lines={["POUR JOINT"]} />
        <Note x={26} y={304} lines={["FORM SET #2"]} />
        <Note x={191} y={193} lines={["FORM SET #3"]} />
        <Note x={299} y={209} lines={["5/8\" OR 3/4\" PLYWOOD", "SHEATHING ON 11 7/8\" MANUF", "JOISTS @ 16\" O/C MAX"]} />
        <Note x={299} y={371} lines={["5/8\" OR 3/4\" PLYWOOD", "SHEATHING ON 11 7/8\" MANUF"]} />
        <Note x={240} y={331} lines={["18' - 0\"  RADIUS"]} />
        <Note x={110} y={326} lines={["8\""]} />
        <g fontSize="4">
          <text transform="translate(232 153) rotate(-90)">11' - 7 5/8"</text>
          <text transform="translate(242 120) rotate(-38)">27' - 5 7/8"</text>
          <text transform="translate(229 216) rotate(-90)">5/8"</text>
          <text transform="translate(232 243) rotate(-90)">11 7/8"</text>
          <text transform="translate(232 325) rotate(-90)">9' - 6 3/4"</text>
          <text transform="translate(133 313) rotate(-86)">10' - 0"</text>
        </g>
      </g>
    </svg>
  );
}

function Viewer() {
  return (
    <div className="flex min-h-0 flex-1">
      <main className={`flex min-w-0 flex-1 justify-center overflow-hidden border-t border-l border-[#444] pt-1 shadow-[inset_3px_3px_4px_rgba(0,0,0,0.35)] ${weave}`}>
        <div className="aspect-[452/378] h-full shrink-0 bg-white shadow-[0_0_4px_1px_rgba(0,0,0,0.8)]">
          <Drawing />
        </div>
      </main>
      <div className="flex w-4 shrink-0 flex-col items-center bg-[#f3f3f3] pt-1">
        <Svg w={10} h={8}><path d="M1.500 6L5 2.500L8.500 6" stroke="#555" strokeWidth="1.300" /></Svg>
        <span className="mt-0.5 h-[50px] w-[5px] rounded-full bg-[#8a8a8a]" />
        <span className="mt-auto mb-1"><Chevron color="#555" /></span>
      </div>
    </div>
  );
}

function GripDock() {
  return (
    <span className="flex w-[10px] shrink-0 flex-col items-center self-stretch pt-0.5">
      <Grip />
      <Dock />
    </span>
  );
}

function StatusBar() {
  const [page, setPage] = useState("1");
  return (
    <footer className="flex h-8 shrink-0 items-center border-t border-[#666] bg-[#f3f3f3] pl-px">
      <GripDock />
      <button type="button" className="flex items-center gap-1 pl-0.5">
        <Svg>
          <Gear x={8} y={8} r={8} color="#8a8a8a" hole="#f3f3f3" />
          <Gear x={17} y={17} r={6.800} color={orange} hole="#f3f3f3" />
        </Svg>
        <span className="w-[52px] text-left">Options...</span>
        <Chevron />
      </button>
      <span className="w-[21px]" />
      <GripDock />
      <Btn label="First page" className="w-7">
        <Round color="#aaa"><path d="M8.500 7v10M16 7.500L11.500 12l4.500 4.500" stroke="#90c8f5" strokeWidth="1.800" /></Round>
      </Btn>
      <Btn label="Previous page" className="w-7">
        <Round color="#aaa"><path d="M14 7l-5 5l5 5" stroke="#90c8f5" strokeWidth="1.800" /></Round>
      </Btn>
      <label className="ml-px flex h-[23px] w-[96px] shrink-0 items-center rounded-xs border border-[#b0b0b0] bg-white pr-[3px]">
        <input aria-label="Page" value={page} onChange={(e) => setPage(e.target.value)} className="w-full min-w-0 text-right outline-none" />
        <span className="pl-px">/4</span>
      </label>
      <Btn label="Next page" className="ml-px w-7"><Round><path d="M10 7l5 5l-5 5" stroke={blue} strokeWidth="1.800" /></Round></Btn>
      <Btn label="Last page" className="w-7"><Round><path d="M15.500 7v10M8 7.500l4.500 4.500L8 16.500" stroke={blue} strokeWidth="1.800" /></Round></Btn>
      <span className="mx-px h-6 w-px bg-[#c4c4c4]" />
      <Btn label="Previous view" className="w-7"><ArrowLeft /></Btn>
      <Btn label="Next view" className="w-7"><ArrowLeft faded flip /></Btn>
      <span className="w-0.5" />
      <GripDock />
      <Btn label="Single page" className="ml-0.5 w-7"><PageSingle /></Btn>
      <Btn label="Continuous" className="h-7 w-7 border border-[#c4a873] bg-[#e8d4a2]"><PageContinuous /></Btn>
      <Btn label="Two pages" className="w-7"><PageTwo /></Btn>
      <Btn label="Two pages continuous" className="w-7"><PageFour /></Btn>
      <span className="w-0.5" />
      <GripDock />
      <ZoomSelect id="status-zoom" />
      <span className="mx-px h-7 w-px bg-[#c4c4c4]" />
      <Btn label="Zoom out" className="w-[26px]"><Minus /></Btn>
      <input
        type="range"
        aria-label="Zoom"
        defaultValue={16}
        className="mx-1 h-5 w-[98px] min-w-0 appearance-none bg-[linear-gradient(#c2c2c2,#c2c2c2)] bg-[length:100%_3px] bg-center bg-no-repeat [&::-webkit-slider-thumb]:h-5 [&::-webkit-slider-thumb]:w-5 [&::-webkit-slider-thumb]:appearance-none [&::-webkit-slider-thumb]:rounded-full [&::-webkit-slider-thumb]:border [&::-webkit-slider-thumb]:border-[#747474] [&::-webkit-slider-thumb]:bg-[radial-gradient(circle,#909090_4px,#fafafa_5px)]"
      />
      <Btn label="Zoom in" className="w-[26px]"><Plus /></Btn>
      <span className="w-1" />
      <GripDock />
      <Btn label="Layout" className="w-7">
        <Svg w={16} h={12}>
          <rect x=".5" y=".5" width="15" height="11" fill="#fff" stroke="#b5cfe0" />
          <path d="M5 3h6v8H5z" fill="#8dbfe5" />
          <path d="M1 1.500h14M2 5h2M2 7h2M2 9h2M12 5h2M12 7h2M12 9h2" stroke="#b5b5b5" />
        </Svg>
      </Btn>
      <Btn label="Layout menu" className="w-3"><Chevron color="#a0a0a0" /></Btn>
      <Btn label="Last view" className="ml-auto w-3 self-start">
        <Svg w={10} h={10}><path d="M2 2l3 3l3-3M1.500 8h7" stroke="#444" strokeWidth="1.400" /></Svg>
      </Btn>
    </footer>
  );
}

export default function App() {
  return (
    <div className="flex h-screen w-full flex-col overflow-hidden rounded-lg border border-[#b0b0b0] bg-[#d5d5d5] font-['Open_Sans','Noto_Sans',sans-serif] text-xs leading-4 text-black">
      <TitleBar />
      <MenuBar />
      <Ribbon />
      <DocumentTabs />
      <div className="flex min-h-0 flex-1">
        <SidePanel />
        <div className="flex min-w-0 flex-1 flex-col">
          <Viewer />
          <StatusBar />
        </div>
      </div>
    </div>
  );
}
